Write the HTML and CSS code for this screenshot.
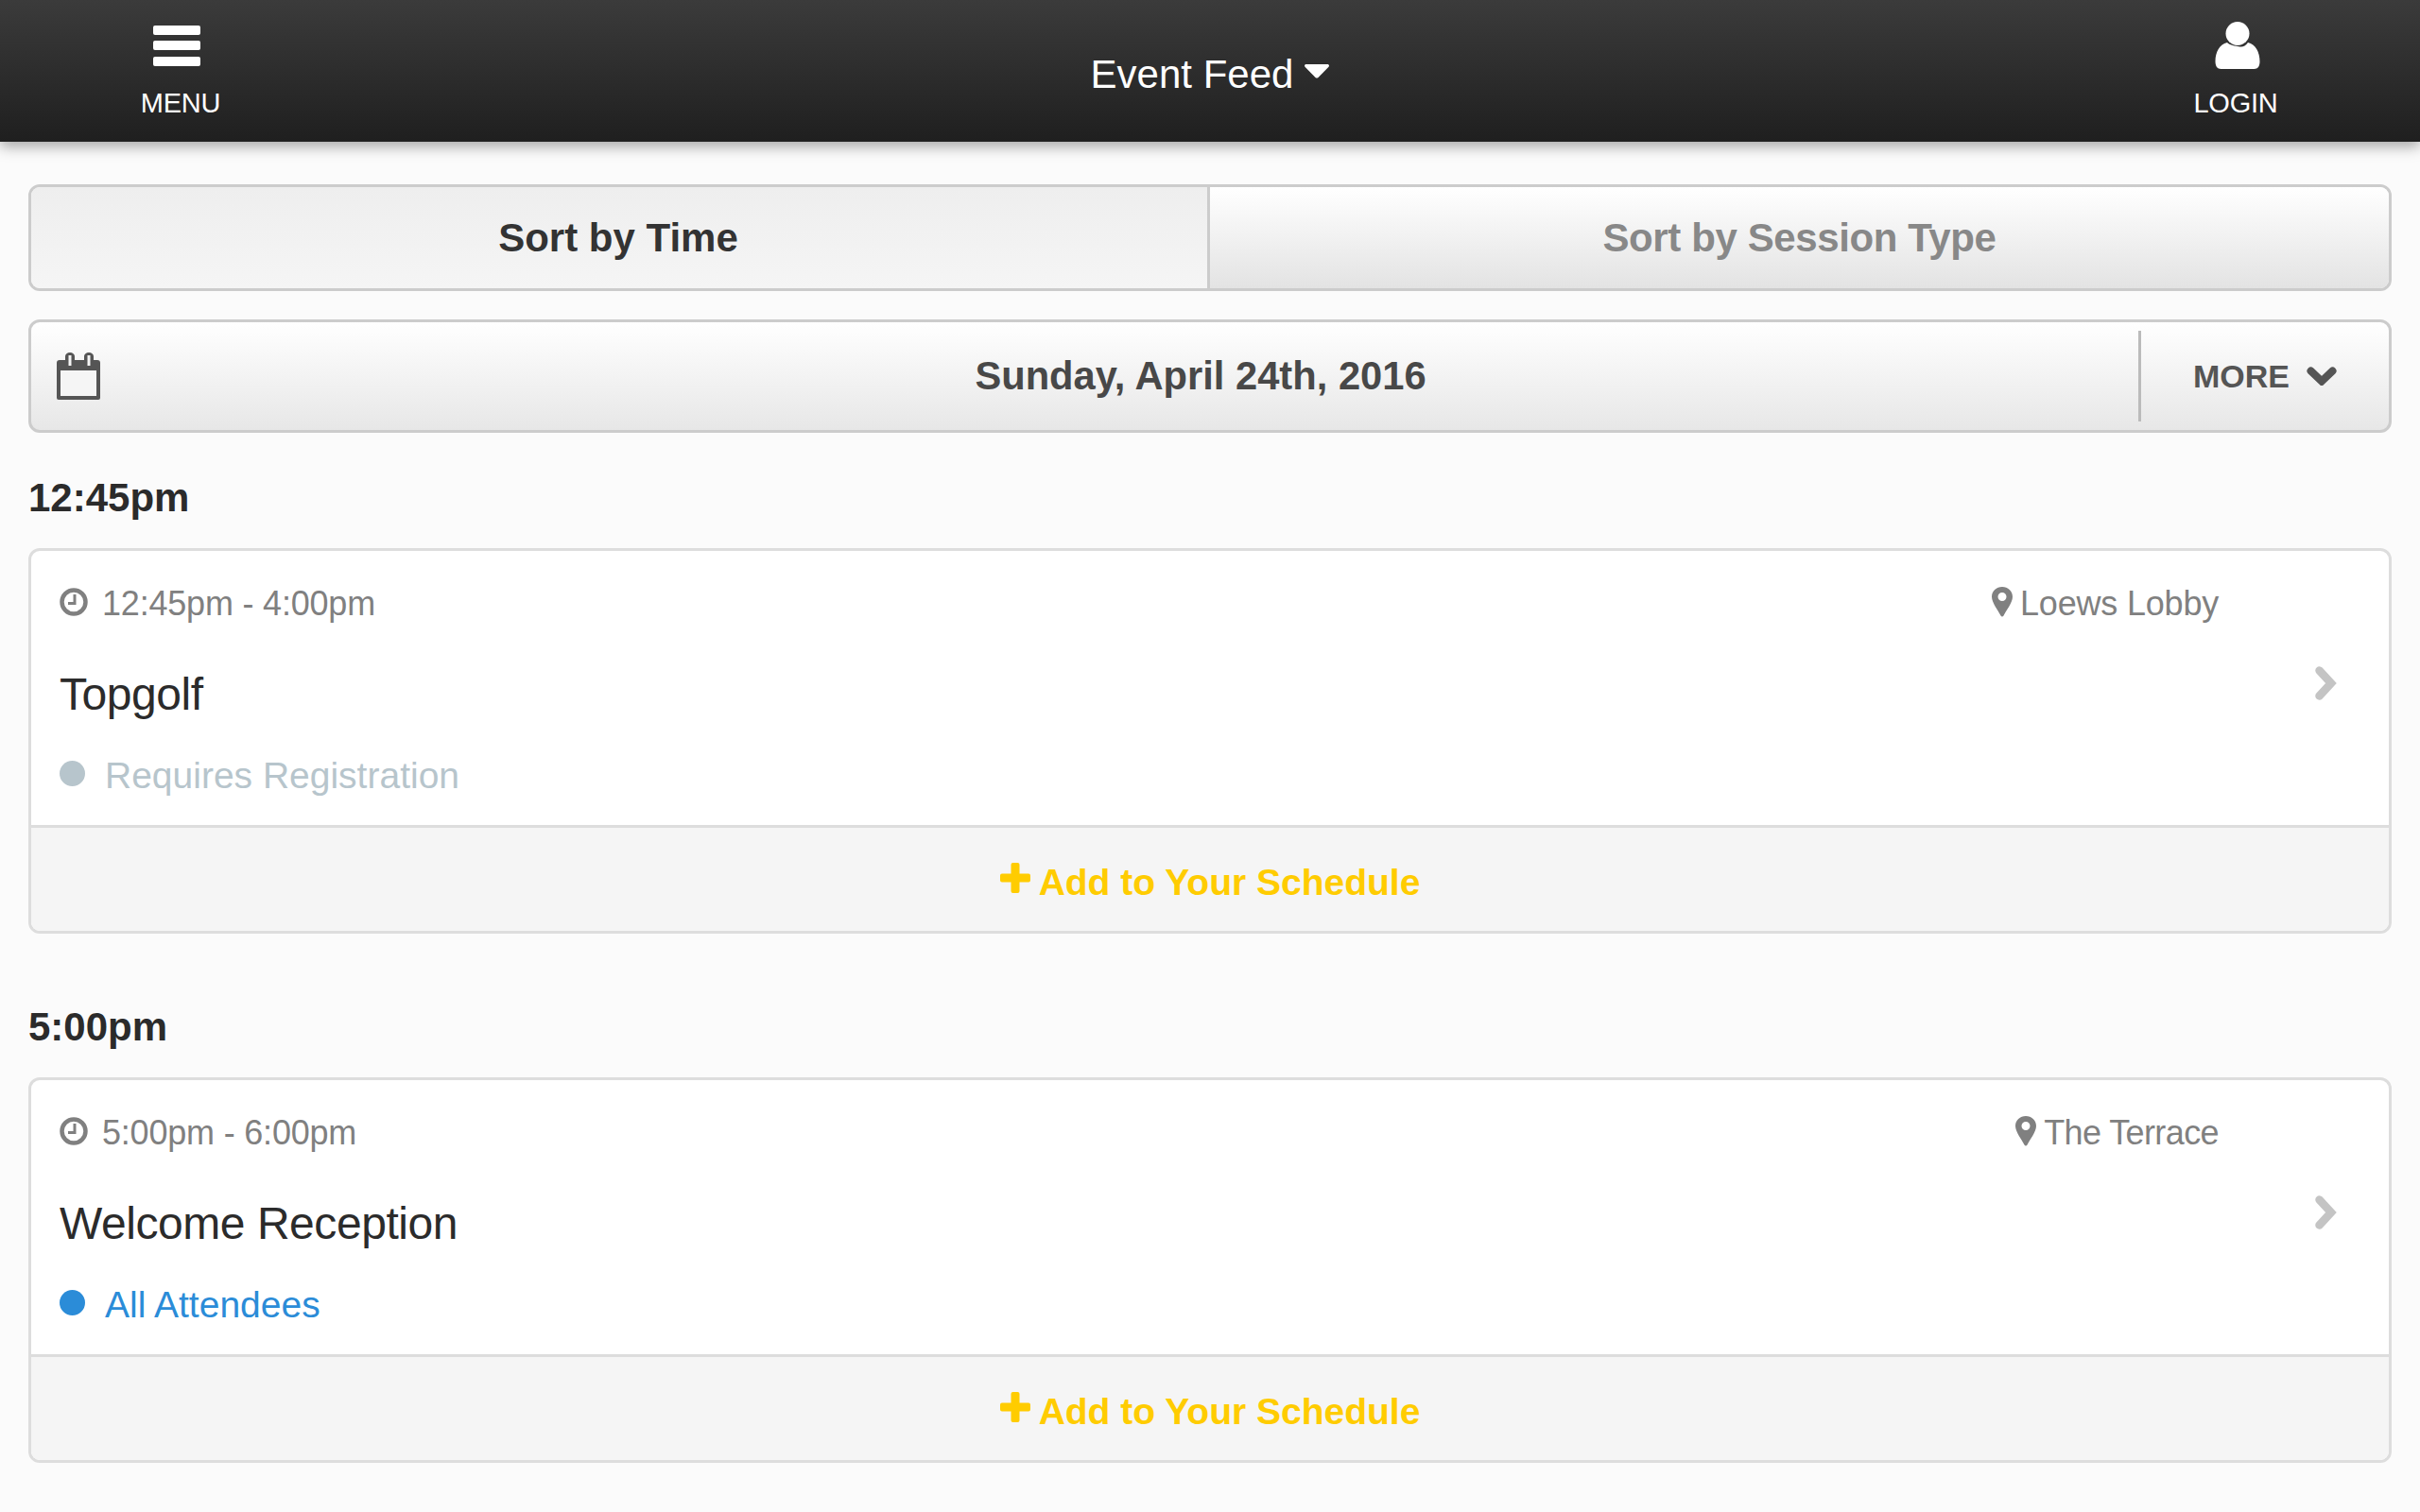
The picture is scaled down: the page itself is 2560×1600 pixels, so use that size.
FILE: index.html
```html
<!DOCTYPE html>
<html lang="en">
<head>
<meta charset="utf-8">
<title>Event Feed</title>
<link rel="stylesheet" href="styles.css">
</head>
<body>
<header class="topbar">
  <div class="nav-item nav-menu">
    <svg class="nav-icon" width="52" height="50" viewBox="0 0 52 50"><rect x="1" y="4" width="50" height="10" rx="2" fill="#fff"/><rect x="1" y="20" width="50" height="10" rx="2" fill="#fff"/><rect x="1" y="37" width="50" height="10" rx="2" fill="#fff"/></svg>
    <span class="nav-label">MENU</span>
  </div>
  <div class="nav-title"><span>Event Feed</span>
    <svg width="26" height="15" viewBox="0 0 26 15"><path d="M2 0h22c2 0 2.600 1.600 1.300 3L14.500 14c-.8.8-2.200.8-3 0L.7 3C-.6 1.600 0 0 2 0z" fill="#fff"/></svg>
  </div>
  <div class="nav-item nav-login">
    <svg class="nav-icon" width="48" height="50" viewBox="0 0 48 50"><path d="M13 22C5 24 0.500 32 0.500 42c0 5 2 8 6 8h35c4 0 6-3 6-8 0-10-4.500-18-12.500-20-2 3-5 4.500-7 4.500S15 25 13 22z" fill="#fff"/><circle cx="24" cy="12.500" r="12.500" fill="#fff"/></svg>
    <span class="nav-label">LOGIN</span>
  </div>
</header>

<main class="content">
  <div class="tabs">
    <div class="tab tab-active">Sort by Time</div>
    <div class="tab tab-idle">Sort by Session Type</div>
  </div>

  <div class="datebar">
    <svg class="cal" width="46" height="50" viewBox="0 0 46 50"><path d="M3 8h40a3 3 0 0 1 3 3v37a2 2 0 0 1-2 2H2a2 2 0 0 1-2-2V11a3 3 0 0 1 3-3z" fill="#555"/><rect x="4" y="19" width="38" height="27" fill="#f5f5f5"/><path d="M9 8V4a5 4 0 0 1 10 0v4zM29 8V4a5 4 0 0 1 10 0v4z" fill="#555"/><path d="M14 3v11M34 3v11" stroke="#f5f5f5" stroke-width="3"/></svg>
    <div class="date-text">Sunday, April 24th, 2016</div>
    <div class="more"><span>MORE</span>
      <svg width="32" height="20" viewBox="0 0 32 20"><path d="M4.500 4.500L16 15.500 27.500 4.500" fill="none" stroke="#555" stroke-width="8" stroke-linecap="round"/></svg>
    </div>
  </div>

  <section class="slot">
    <h2 class="slot-time">12:45pm</h2>
    <article class="card">
      <div class="card-body">
        <div class="card-main">
          <div class="meta">
            <span class="meta-item"><svg width="30" height="30" viewBox="0 0 30 30"><circle cx="15" cy="15" r="12.500" fill="none" stroke="#808080" stroke-width="4.500"/><path d="M16 7v9.500H9" fill="none" stroke="#808080" stroke-width="3"/></svg>12:45pm - 4:00pm</span>
            <span class="meta-item"><svg class="pin" width="22" height="32" viewBox="0 0 22 32"><path fill-rule="evenodd" d="M11 0c6 0 11 4.500 11 10.500 0 6-7 15-9.500 20-.7 1.300-2.300 1.300-3 0C7 25.500 0 16.500 0 10.500 0 4.500 5 0 11 0zm0 6a4.500 4.500 0 1 0 0 9 4.500 4.500 0 0 0 0-9z" fill="#808080"/></svg>Loews Lobby</span>
          </div>
          <h3 class="title">Topgolf</h3>
          <div class="tag tag-grey"><i class="dot"></i>Requires Registration</div>
        </div>
        <svg class="go" width="24" height="36" viewBox="0 0 24 36"><path d="M4.500 4.500L17 18 4.500 31.500" fill="none" stroke="#c4c4c4" stroke-width="8.500" stroke-linecap="round"/></svg>
      </div>
      <div class="card-foot"><svg width="32" height="32" viewBox="0 0 32 32"><path d="M11.500 2a2 2 0 0 1 2-2h5a2 2 0 0 1 2 2v9.500H30a2 2 0 0 1 2 2v5a2 2 0 0 1-2 2h-9.500V30a2 2 0 0 1-2 2h-5a2 2 0 0 1-2-2v-9.500H2a2 2 0 0 1-2-2v-5a2 2 0 0 1 2-2h9.500z" fill="#fc0"/></svg>Add to Your Schedule</div>
    </article>
  </section>

  <section class="slot">
    <h2 class="slot-time">5:00pm</h2>
    <article class="card">
      <div class="card-body">
        <div class="card-main">
          <div class="meta">
            <span class="meta-item"><svg width="30" height="30" viewBox="0 0 30 30"><circle cx="15" cy="15" r="12.500" fill="none" stroke="#808080" stroke-width="4.500"/><path d="M16 7v9.500H9" fill="none" stroke="#808080" stroke-width="3"/></svg>5:00pm - 6:00pm</span>
            <span class="meta-item meta-tight"><svg class="pin" width="22" height="32" viewBox="0 0 22 32"><path fill-rule="evenodd" d="M11 0c6 0 11 4.500 11 10.500 0 6-7 15-9.500 20-.7 1.300-2.300 1.300-3 0C7 25.500 0 16.500 0 10.500 0 4.500 5 0 11 0zm0 6a4.500 4.500 0 1 0 0 9 4.500 4.500 0 0 0 0-9z" fill="#808080"/></svg>The Terrace</span>
          </div>
          <h3 class="title">Welcome Reception</h3>
          <div class="tag tag-blue"><i class="dot"></i>All Attendees</div>
        </div>
        <svg class="go" width="24" height="36" viewBox="0 0 24 36"><path d="M4.500 4.500L17 18 4.500 31.500" fill="none" stroke="#c4c4c4" stroke-width="8.500" stroke-linecap="round"/></svg>
      </div>
      <div class="card-foot"><svg width="32" height="32" viewBox="0 0 32 32"><path d="M11.500 2a2 2 0 0 1 2-2h5a2 2 0 0 1 2 2v9.500H30a2 2 0 0 1 2 2v5a2 2 0 0 1-2 2h-9.500V30a2 2 0 0 1-2 2h-5a2 2 0 0 1-2-2v-9.500H2a2 2 0 0 1-2-2v-5a2 2 0 0 1 2-2h9.500z" fill="#fc0"/></svg>Add to Your Schedule</div>
    </article>
  </section>
</main>
</body>
</html>
```
FILE: styles.css
```css
* { box-sizing: border-box; }
html, body { margin: 0; padding: 0; height: 100%; overflow: hidden; }
body {
  background: #fbfbfb;
  font-family: "Liberation Sans", Arial, sans-serif;
  color: #333;
}

/* Top bar */
.topbar {
  height: 150px;
  display: grid;
  grid-template-columns: 382px 1fr 390px;
  background: linear-gradient(#3b3b3b, #1f1f1f);
  box-shadow: 0 5px 14px rgba(0, 0, 0, .35);
  color: #fff;
  padding-top: 23px;
}
.nav-item { display: flex; flex-direction: column; align-items: center; }
.nav-icon { display: block; }
.nav-menu .nav-icon { margin-right: 8px; }
.nav-login .nav-icon { margin-left: 3px; }
.nav-label { font-size: 29px; line-height: 34px; margin-top: 19px; letter-spacing: -.2px; }
.nav-title {
  display: flex; align-items: center; justify-content: center; gap: 12px;
  font-size: 42px; line-height: 50px; height: 50px;
  margin-top: 31px; padding-left: 8px;
}
.nav-title svg { margin-bottom: 7px; }

/* Content */
.content { padding: 45px 30px 0 30px; }

.tabs {
  display: flex; height: 113px;
  border: 3px solid #ccc; border-radius: 12px; overflow: hidden;
  font-size: 42px; font-weight: 700;
}
.tab { display: flex; align-items: center; justify-content: center; }
.tab-active { flex: 0 0 1247px; background: linear-gradient(#eee, #f5f5f5); color: #333; border-right: 3px solid #ccc; padding-right: 2px; }
.tab-idle { flex: 1; background: linear-gradient(#fff, #e3e3e3); color: #888; letter-spacing: -.4px; }

.datebar {
  display: flex; align-items: center; height: 120px; margin-top: 30px;
  padding: 9px 0 9px 27px;
  border: 3px solid #ccc; border-radius: 12px;
  background: linear-gradient(#fff, #e7e7e7);
}
.cal { flex: none; }
.date-text {
  flex: 1; text-align: center; padding-left: 172px;
  font-size: 41.700px; font-weight: 700; color: #484848;
}
.more {
  flex: none; width: 265px; height: 96px;
  display: flex; align-items: center; justify-content: center; gap: 18px;
  border-left: 3px solid #bbb;
  font-size: 34px; font-weight: 700; color: #555;
}

/* Time slots */
.slot-time {
  margin: 44px 0 28px;
  font-size: 42px; line-height: 50px; font-weight: 700; color: #2b2b2b;
}
.slot + .slot { margin-top: 74px; }
.slot + .slot .slot-time { margin-top: 0; }

.card {
  height: 408px;
  border: 3px solid #ddd; border-radius: 12px; overflow: hidden;
  background: #fff;
}
.card-body { height: 290px; display: flex; align-items: center; padding: 0 54px 0 30px; }
.card-main { flex: 1; padding-top: 35px; height: 100%; }
.meta {
  display: flex; justify-content: space-between;
  font-size: 36px; line-height: 42px; color: #808080;
  letter-spacing: -.2px; padding-right: 2px;
}
.meta-item { display: flex; align-items: center; }
.meta-tight { letter-spacing: -.6px; }
.meta-item svg { margin-right: 15px; margin-bottom: 5px; }
.meta-item .pin { margin-right: 8px; }
.title { margin: 45px 0 0; font-size: 48px; line-height: 60px; font-weight: 400; color: #2b2b2b; letter-spacing: -.45px; }
.tag { display: flex; align-items: center; margin-top: 33px; font-size: 39px; line-height: 46px; }
.dot { width: 27px; height: 27px; border-radius: 50%; margin-right: 21px; margin-bottom: 5px; background: currentColor; }
.tag-grey { color: #b7c5cc; }
.tag-blue { color: #2b8cd8; }
.go { flex: none; margin: 0 0 10px 100px; }

.card-foot {
  height: 112px;
  display: flex; align-items: center; justify-content: center; gap: 9px;
  padding-top: 6px;
  border-top: 3px solid #ddd;
  background: #f5f5f5;
  font-size: 39px; font-weight: 700; color: #fc0;
}
.card-foot svg { margin-bottom: 10px; }
```
